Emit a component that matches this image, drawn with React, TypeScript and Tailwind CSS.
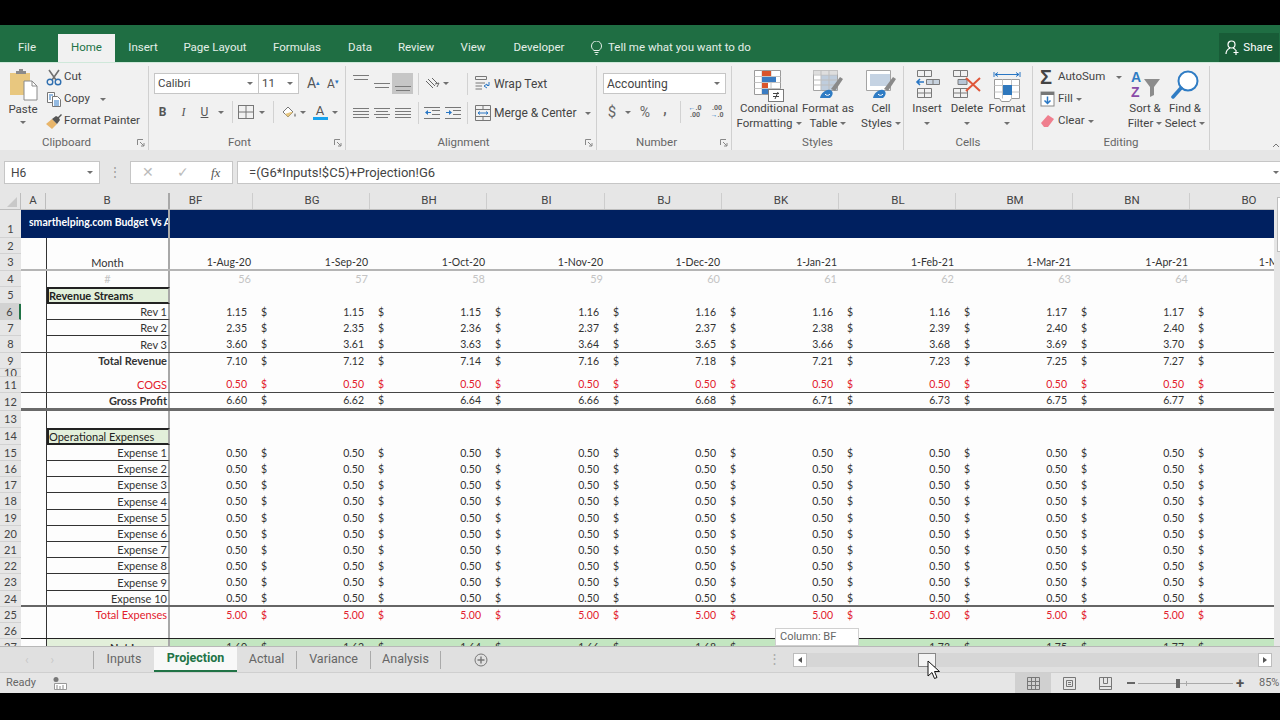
import type { ReactNode } from 'react';

const ui = "font-['Roboto','Open_Sans',sans-serif]";
const cellFont = "font-['Lato','Liberation_Sans',sans-serif]";

function Caret({ className = '' }: { className?: string }) {
  return <span className={`inline-block border-x-[3px] border-t-[3px] border-x-transparent border-t-[#707070] ${className}`} />;
}

function Box({ w, children, className = '' }: { w: string; children?: ReactNode; className?: string }) {
  return <div className={`${w} h-[20px] shrink-0 flex items-center justify-center ${className}`}>{children}</div>;
}

function Sep() {
  return <div className="w-px h-[22px] bg-[#d2d2d2] shrink-0" />;
}

function Lines({ rows }: { rows: [number, number][] }) {
  return (
    <svg width="16" height="14" viewBox="0 0 16 14" stroke="#7a7a7a" strokeWidth="1">
      {rows.map(([x, y], i) => (
        <line key={i} x1={x} x2={16 - x} y1={y + 0.5} y2={y + 0.5} />
      ))}
    </svg>
  );
}

function IndentIcon({ flip }: { flip?: boolean }) {
  return (
    <svg width="16" height="14" viewBox="0 0 16 14">
      <g stroke="#777">
        <line x1="8" x2="16" y1="4.5" y2="4.5" />
        <line x1="8" x2="16" y1="8.5" y2="8.5" />
        <line x1="0" x2="16" y1="12.5" y2="12.5" />
        <line x1="0" x2="16" y1="1.5" y2="1.5" />
      </g>
      <path d={flip ? 'M1 6h3V4l3 2.500L4 9V7H1z' : 'M7 6H4V4L1 6.500 4 9V7h3z'} fill="#2a77c4" />
    </svg>
  );
}

function PasteIcon() {
  return (
    <svg width="28" height="32" viewBox="0 0 28 32">
      <path d="M0 4h20v22H0z" fill="#e8c77f" />
      <path d="M6 4V2h3V0h4v2h3v3H6z" fill="#8a8a8a" />
      <path d="M14 12h8l5 5v14H14z" fill="#fff" stroke="#8a8a8a" />
      <path d="M22 12v5h5" fill="none" stroke="#8a8a8a" />
    </svg>
  );
}

function CutIcon() {
  return (
    <svg width="16" height="17" viewBox="0 0 16 17" fill="none" className="shrink-0">
      <path d="M3 1l7 10M13 1L6 11" stroke="#707070" strokeWidth="1.6" />
      <circle cx="4" cy="13" r="2.8" stroke="#2f6fb0" strokeWidth="1.4" />
      <circle cx="12" cy="13" r="2.8" stroke="#2f6fb0" strokeWidth="1.4" />
    </svg>
  );
}

function CopyIcon() {
  return (
    <svg width="16" height="15" viewBox="0 0 16 15" fill="#fff" stroke="#777" className="shrink-0">
      <path d="M1.500.5h7v10h-7z" />
      <path d="M6.500 4.500h5l3 3v7h-8z" />
      <path d="M3 3h4M3 5h2M3 7h2M8 9h5M8 11h5M8 13h5" stroke="#2a77c4" />
    </svg>
  );
}

function PainterIcon() {
  return (
    <svg width="16" height="15" viewBox="0 0 16 15" className="shrink-0">
      <path d="M0 10l6-5 5 5-5 5z" fill="#e8b56a" />
      <path d="M6 5l4-3 2 1 3-3 1 1-3 3 1 2-3 4z" fill="#555" />
    </svg>
  );
}

function GridIcon() {
  return (
    <svg width="16" height="14" viewBox="0 0 16 14" fill="none" stroke="#777">
      <rect x="0.5" y="0.5" width="15" height="13" />
      <path d="M8 .5v13M.5 7h15" />
    </svg>
  );
}

function CondIcon() {
  return (
    <svg width="30" height="32" viewBox="0 0 30 32">
      <path d="M.5.5h26v24H.5z" fill="#fff" stroke="#9a9a9a" />
      <path d="M8 .5v24M17 .5v24M.5 6.500h26M.5 12.500h26M.5 18.500h26" stroke="#c4c4c4" />
      <path d="M8 1h9v5H8zM8 13h6v5H8z" fill="#d9552b" />
      <path d="M8 7h14v5H8zM8 19h6v5H8z" fill="#3a7cc2" />
      <rect x="14.500" y="19.500" width="15" height="12" fill="#fff" stroke="#7a7a7a" />
      <path d="M19 23.500h6M19 26.500h6M24 22l-3 7" stroke="#444" fill="none" />
    </svg>
  );
}

function TableIcon({ partial }: { partial?: boolean }) {
  return (
    <svg width="30" height="30" viewBox="0 0 30 30">
      <path d="M.5.5h24v20H.5z" fill="#fff" stroke="#a4a4a4" />
      {partial ? (
        <path d="M4 4h20v12H4z" fill="#c5d3e3" />
      ) : (
        <>
          <path d="M.5 .5h24v4H.5z" fill="#dedede" />
          <path d="M8 5h16v15H8z" fill="#bfcddd" />
          <path d="M8 .5v20M16 .5v20M.5 5h24M.5 10h24M.5 15h24" stroke="#bdbdbd" />
        </>
      )}
      <path d="M18 19l9-12 3 2-8 12z" fill="#8a8a8a" />
      <path d="M7 28c1-5 6-9 10-8 4 1 3 6 0 8z" fill="#2f7cc4" />
      <path d="M17 24a3 3 0 0 1-5 0" stroke="#fff" fill="none" />
    </svg>
  );
}

function InsertIcon() {
  return (
    <svg width="26" height="28" viewBox="0 0 26 28" fill="none" stroke="#7a7a7a">
      <path d="M3.500 .5h14v6h-14zM10.500 .5v6M3.500 18.500h14v9h-14zM10.500 18.500v9M3.500 23h14" />
      <path d="M12.500 9.500h13v5h-13zM19 9.500v5" fill="#c7d2de" />
      <path d="M10 12H3M6 9l-3 3 3 3" stroke="#2a77c4" strokeWidth="1.6" />
    </svg>
  );
}

function DeleteIcon() {
  return (
    <svg width="30" height="28" viewBox="0 0 30 28" fill="none" stroke="#7a7a7a">
      <path d="M1.500 .5h14v6h-14zM8.500 .5v6M1.500 18.500h14v9h-14zM8.500 18.500v9M1.500 23h14" />
      <path d="M6 9.500h9v5H6z" fill="#b8c6d6" />
      <path d="M14 8l14 13M28 8L14 21" stroke="#e0573a" strokeWidth="2" />
    </svg>
  );
}

function FormatIcon() {
  return (
    <svg width="28" height="32" viewBox="0 0 28 32" fill="none">
      <path d="M1 2v5M27 2v5M2 4.500h24M2 4.500l3-2M2 4.500l3 2M26 4.500l-3-2M26 4.500l-3 2" stroke="#2a77c4" />
      <path d="M1.500 9.500h25v19l-8 0-2 3h-8l-2-3h-5z" fill="#fff" stroke="#9a9a9a" />
      <path d="M9.500 9.500v19M18.500 9.500v19M1.500 15.500h25M1.500 22h25" stroke="#c4c4c4" />
      <rect x="10" y="15" width="9" height="10" fill="#2f78bd" />
    </svg>
  );
}

function SortIcon() {
  return (
    <svg width="30" height="30" viewBox="0 0 30 30">
      <path d="M14 9h16l-6 8v8l-4 2V17z" fill="#8c8c8c" />
      <text x="1" y="12" fontSize="14" fontWeight="700" fill="#2f7cc4" fontFamily="Liberation Sans">A</text>
      <text x="1" y="27" fontSize="14" fontWeight="700" fill="#8a4ba8" fontFamily="Liberation Sans">Z</text>
    </svg>
  );
}

function FindIcon() {
  return (
    <svg width="28" height="30" viewBox="0 0 28 30" fill="none">
      <circle cx="17" cy="11" r="9.500" stroke="#2f7cc4" strokeWidth="2" fill="#fff" />
      <path d="M10 18L2 27" stroke="#2f7cc4" strokeWidth="3.500" strokeLinecap="round" />
    </svg>
  );
}

function LargeButton({ w, icon, l1, l2, caret = true }: { w: string; icon: ReactNode; l1: string; l2?: string; caret?: boolean }) {
  return (
    <div className={`${w} shrink-0 flex flex-col items-center pt-[7px]`}>
      <div className="h-[31px] flex items-start">{icon}</div>
      <div className="h-[15px] leading-[15px] whitespace-nowrap">{l1}</div>
      <div className="h-[15px] leading-[15px] whitespace-nowrap flex items-center gap-[3px]">
        {l2}
        {caret && <Caret />}
      </div>
    </div>
  );
}

function Group({ w, label, launcher = true, children }: { w: string; label: string; launcher?: boolean; children: ReactNode }) {
  return (
    <div className={`${w} shrink-0 h-[84px] mt-[3px] flex flex-col border-r border-[#d0d0d0]`}>
      <div className="h-[69px] -mt-[3px]">{children}</div>
      <div className="h-[18px] flex items-center relative text-[#666]">
        <span className={`flex-1 text-center leading-[18px] pt-[2px] ${launcher ? 'pr-[15px]' : ''}`}>{label}</span>
        {launcher && (
          <svg className="absolute right-[3px] top-[7px]" width="8" height="8" viewBox="0 0 8 8" fill="none" stroke="#888">
            <path d="M.5 6V.5H6M3 3l4 4M7 4v3H4" />
          </svg>
        )}
      </div>
    </div>
  );
}

function Ribbon() {
  return (
    <div className={`h-[88px] bg-[#f1f1f1] border-t border-[#cfe8da] flex text-[11.5px] text-[#444] ${ui}`}>
      <Group w="w-[149px]" label="Clipboard">
        <div className="flex">
          <div className="w-[46px] flex flex-col items-center pt-[6px]">
            <div className="h-[30px] pl-[2px]"><PasteIcon /></div>
            <div className="h-[15px] leading-[15px] mt-[3px]">Paste</div>
            <Caret className="mt-[4px]" />
          </div>
          <div className="flex flex-col pt-[3px]">
            <div className="h-[22px] flex items-center gap-[2px]"><CutIcon /><span>Cut</span></div>
            <div className="h-[22px] flex items-center gap-[2px]"><CopyIcon /><span>Copy</span><Caret className="ml-[8px]" /></div>
            <div className="h-[22px] flex items-center gap-[2px]"><PainterIcon /><span>Format Painter</span></div>
          </div>
        </div>
      </Group>
      <Group w="w-[197px]" label="Font">
        <div className="flex items-center h-[21px] mt-[10px] pl-[5px]">
          <div className="w-[105px] h-[21px] bg-white border border-[#c6c6c6] flex items-center justify-between px-[3px]">Calibri<Caret className="mr-[2px]" /></div>
          <div className="w-[40px] h-[21px] bg-white border border-l-0 border-[#c6c6c6] flex items-center justify-between px-[3px]">11<Caret className="mr-[2px]" /></div>
          <span className="ml-[8px] w-[19px] text-[14px] text-[#555]">A<sup className="text-[#2a77c4] text-[7px]">▴</sup></span>
          <span className="ml-[1px] text-[12px] text-[#555]">A<sup className="text-[#2a77c4] text-[7px]">▾</sup></span>
        </div>
        <div className="flex items-center h-[20px] mt-[8px] pl-[3px] text-[12px] text-[#555]">
          <Box w="w-[21px]" className="font-bold">B</Box>
          <Box w="w-[21px]" className="italic font-['Liberation_Serif']">I</Box>
          <Box w="w-[21px]" className="underline">U</Box>
          <Box w="w-[12px]"><Caret /></Box>
          <div className="w-[5px]" />
          <Sep />
          <Box w="w-[26px]"><GridIcon /></Box>
          <Box w="w-[6px]"><Caret /></Box>
          <div className="w-[8px]" />
          <Sep />
          <div className="w-[6px]" />
          <Box w="w-[18px]">
            <svg width="16" height="14" viewBox="0 0 16 14" fill="none">
              <path d="M2 7l5-5 5 5-5 5z" stroke="#777" fill="#fff" />
              <path d="M4 9l6-2 2 0-5 5z" fill="#e8c77f" />
              <path d="M14 8c1 2 1 3 0 4-1-1-1-2 0-4z" fill="#777" />
            </svg>
          </Box>
          <Box w="w-[10px]"><Caret /></Box>
          <Box w="w-[24px]" className="flex-col">
            <span className="leading-[13px] text-[13px]">A</span>
            <span className="w-[15px] h-[3px] bg-[#18a3ee]" />
          </Box>
          <Box w="w-[6px]"><Caret /></Box>
        </div>
      </Group>
      <Group w="w-[251px]" label="Alignment">
        <div className="flex items-center h-[21px] mt-[10px] pl-[4px]">
          <Box w="w-[21px]" className="pb-[6px]"><Lines rows={[[0, 1], [1, 5]]} /></Box>
          <Box w="w-[21px]"><Lines rows={[[0, 6], [1, 10]]} /></Box>
          <Box w="w-[21px]" className="h-[21px] bg-[#c6c6c6] pt-[6px]"><Lines rows={[[0, 6], [1, 10]]} /></Box>
          <div className="w-[5px]" />
          <Sep />
          <div className="w-[5px]" />
          <Box w="w-[16px]">
            <svg width="16" height="14" viewBox="0 0 16 14" fill="none" stroke="#666">
              <path d="M2 4l7 7M4 2l7 7M8 1l5 5M13 10l2 -4-4 1" />
            </svg>
          </Box>
          <Box w="w-[12px]"><Caret /></Box>
          <div className="w-[15px]" />
          <Sep />
          <div className="w-[7px]" />
          <svg width="16" height="16" viewBox="0 0 16 16" fill="none" stroke="#777" className="shrink-0">
            <path d="M.5.5h11v3H.5zM.5 7H10M.5 10H7M.5 13H7" />
            <path d="M9 10l3-2 0 1.500h2V6M9 10l3 2" stroke="#2a77c4" />
          </svg>
          <span className="ml-[3px] text-[12px]">Wrap Text</span>
        </div>
        <div className="flex items-center h-[20px] mt-[9px] pl-[4px]">
          <Box w="w-[21px]"><Lines rows={[[0, 2], [0, 5], [0, 8], [0, 11]]} /></Box>
          <Box w="w-[21px]"><Lines rows={[[0, 2], [2, 5], [0, 8], [2, 11]]} /></Box>
          <Box w="w-[21px]"><Lines rows={[[0, 2], [0, 5], [0, 8], [0, 11]]} /></Box>
          <div className="w-[5px]" />
          <Sep />
          <div className="w-[3px]" />
          <Box w="w-[20px]"><IndentIcon /></Box>
          <Box w="w-[21px]"><IndentIcon flip /></Box>
          <div className="w-[4px]" />
          <Sep />
          <div className="w-[7px]" />
          <svg width="16" height="16" viewBox="0 0 16 16" fill="none" stroke="#777" className="shrink-0">
            <path d="M.5.5h15v15H.5zM.5 4.500h15M.5 11.500h15M8 .5v4M8 11.500v4" />
            <path d="M3 8h10M3 8l2-1.500M3 8l2 1.500M13 8l-2-1.500M13 8l-2 1.500" stroke="#2a77c4" />
          </svg>
          <span className="ml-[3px] w-[88px] whitespace-nowrap text-[12px]">Merge &amp; Center</span>
          <Caret className="ml-[3px]" />
        </div>
      </Group>
      <Group w="w-[135px]" label="Number">
        <div className="h-[21px] w-[123px] mt-[10px] ml-[6px] bg-white border border-[#c6c6c6] flex items-center justify-between px-[3px] text-[12px]">Accounting<Caret className="mr-[2px]" /></div>
        <div className="flex items-center h-[20px] mt-[8px] pl-[7px] text-[#666]">
          <Box w="w-[16px]" className="text-[15px]">$</Box>
          <Box w="w-[16px]"><Caret /></Box>
          <Box w="w-[18px]" className="text-[14px]">%</Box>
          <Box w="w-[22px]" className="font-bold text-[14px] pb-[5px]">,</Box>
          <div className="w-[4px]" />
          <Sep />
          <Box w="w-[28px]" className="text-[7px] leading-[7px] font-bold">
            <span className="text-center"><span className="text-[#2a77c4]">←</span>.0<br />.00</span>
          </Box>
          <Box w="w-[16px]" className="text-[7px] leading-[7px] font-bold">
            <span className="text-center">.00<br /><span className="text-[#2a77c4]">→</span>.0</span>
          </Box>
        </div>
      </Group>
      <Group w="w-[172px]" label="Styles" launcher={false}>
        <div className="flex pl-[4px] gap-[3px]">
          <LargeButton w="w-[66px]" icon={<CondIcon />} l1="Conditional" l2="Formatting" />
          <LargeButton w="w-[46px]" icon={<TableIcon />} l1="Format as" l2="Table" />
          <div className="w-[3px]" />
          <LargeButton w="w-[42px]" icon={<TableIcon partial />} l1="Cell" l2="Styles" />
        </div>
      </Group>
      <Group w="w-[129px]" label="Cells" launcher={false}>
        <div className="flex pl-[3px]">
          <LargeButton w="w-[40px]" icon={<InsertIcon />} l1="Insert" />
          <LargeButton w="w-[40px]" icon={<DeleteIcon />} l1="Delete" />
          <LargeButton w="w-[40px]" icon={<FormatIcon />} l1="Format" />
        </div>
      </Group>
      <Group w="w-[177px]" label="Editing" launcher={false}>
        <div className="flex pl-[7px]">
          <div className="w-[85px] flex flex-col pt-[3px]">
            <div className="h-[22px] flex items-center gap-[3px]">
              <span className="w-[15px] text-[20px] leading-[19px] font-bold font-['Liberation_Sans'] text-[#444]">Σ</span>
              <span>AutoSum</span><Caret className="ml-[8px]" />
            </div>
            <div className="h-[22px] flex items-center gap-[3px]">
              <svg width="15" height="16" viewBox="0 0 15 16" fill="none">
                <rect x="1" y="1" width="13" height="14" fill="#fff" stroke="#8a8a8a" />
                <path d="M1 1h13v3H1z" fill="#777" />
                <path d="M7.500 5.500v7M4.500 9.500l3 3 3-3" stroke="#2a77c4" strokeWidth="1.500" />
              </svg>
              <span>Fill</span><Caret />
            </div>
            <div className="h-[22px] flex items-center gap-[3px]">
              <svg width="15" height="14" viewBox="0 0 15 14">
                <path d="M1 9l7-8 6 4-6 8H4z" fill="#ef7f8e" />
              </svg>
              <span>Clear</span><Caret />
            </div>
          </div>
          <LargeButton w="w-[40px]" icon={<SortIcon />} l1="Sort &" l2="Filter" />
          <LargeButton w="w-[40px]" icon={<FindIcon />} l1="Find &" l2="Select" />
        </div>
      </Group>
      <div className="flex-1 flex items-end justify-end pb-[3px] pr-px text-[#777]">
        <svg width="6" height="4" viewBox="0 0 6 4" fill="none" stroke="#777"><path d="M0 4l3-3 3 3" /></svg>
      </div>
    </div>
  );
}

function TabStrip() {
  const tabs: [string, string][] = [
    ['File', 'w-[54px] mr-[4px]'],
    ['Home', 'w-[57px]'],
    ['Insert', 'w-[56px]'],
    ['Page Layout', 'w-[88px]'],
    ['Formulas', 'w-[76px]'],
    ['Data', 'w-[50px]'],
    ['Review', 'w-[62px]'],
    ['View', 'w-[52px]'],
    ['Developer', 'w-[80px]'],
  ];
  return (
    <div className={`h-[37px] bg-[#1f6e43] flex items-end text-[11.5px] text-[#e4efe8] ${ui}`}>
      {tabs.map(([t, w]) => (
        <div key={t} className={`${w} h-[28px] flex items-center justify-center ${t === 'Home' ? 'bg-[#f1f1f1] text-[#217346]' : ''}`}>{t}</div>
      ))}
      <div className="h-[28px] flex items-center pl-[12px]">
        <svg width="11" height="14" viewBox="0 0 11 14" fill="none" stroke="#e4efe8">
          <path d="M3 9.500C1 8 .5 6.500.5 5a5 5 0 0 1 10 0c0 1.500-.5 3-2.500 4.500zM3.500 11.500h4M4.500 13.500h2" />
        </svg>
        <span className="ml-[6px]">Tell me what you want to do</span>
      </div>
      <div className="flex-1" />
      <div className="w-[60px] mr-px h-[29px] bg-[#185c37] flex items-center justify-center gap-[3px] text-white">
        <svg width="15" height="15" viewBox="0 0 15 15" fill="none" stroke="#fff" strokeWidth="1.200">
          <circle cx="6.500" cy="4.500" r="3.500" />
          <path d="M1 14c0-3 2-5 4-6M8 8c1 .3 2 1 2.500 2M11 10v5M8.500 12.500h5" />
        </svg>
        Share
      </div>
    </div>
  );
}

function FormulaBar() {
  return (
    <div className={`h-[40px] bg-[#e6e6e6] pt-[11px] text-[12px] text-[#444] ${ui}`}>
      <div className="flex h-[23px] items-stretch">
        <div className="w-[96px] ml-[4px] bg-white border border-[#c6c6c6] flex items-center justify-between pl-[6px] pr-[6px]">H6<Caret /></div>
        <div className="w-[30px] flex items-center justify-center text-[#999] leading-none pb-[2px]">⋮</div>
        <div className="w-[103px] bg-white border border-[#c6c6c6] flex items-center pl-[11px] text-[#bbb]">
          <span className="w-[35px] text-[14px]">✕</span>
          <span className="w-[34px] text-[14px]">✓</span>
          <span className="font-['Liberation_Serif'] italic text-[#555] text-[13px]">fx</span>
        </div>
        <div className="flex-1 ml-[4px] bg-white border border-r-0 border-[#c6c6c6] flex items-center justify-between pl-[11px] pr-[1px] text-[13px]">
          =(G6*Inputs!$C5)+Projection!G6
          <Caret />
        </div>
      </div>
    </div>
  );
}

const colW = ['w-[83px]', 'w-[117px]', 'w-[117px]', 'w-[118px]', 'w-[117px]', 'w-[117px]', 'w-[117px]', 'w-[117px]', 'w-[117px]', 'w-[117px]'];
const colL = ['BF', 'BG', 'BH', 'BI', 'BJ', 'BK', 'BL', 'BM', 'BN', 'BO'];
const dates = ['1-Aug-20', '1-Sep-20', '1-Oct-20', '1-Nov-20', '1-Dec-20', '1-Jan-21', '1-Feb-21', '1-Mar-21', '1-Apr-21', '1-May-21'];
const idx = ['56', '57', '58', '59', '60', '61', '62', '63', '64', '65'];

function ColumnHeaders() {
  return (
    <div className={`h-[20px] bg-[#e6e6e6] flex text-[11.5px] text-[#444] border-b border-[#bdbdbd] overflow-hidden pt-[3px] ${ui}`}>
      <div className="w-[21px] shrink-0 flex items-end justify-end pr-[3px] pb-[2px] border-r border-[#bdbdbd]">
        <span className="border-l-[10px] border-b-[10px] border-l-transparent border-b-[#c8c8c8]" />
      </div>
      <div className="w-[25px] shrink-0 flex items-center justify-center border-r border-[#bdbdbd]">A</div>
      <div className="w-[124px] shrink-0 flex items-center justify-center border-r-2 border-[#a8a8a8]">B</div>
      {colL.map((c, i) => (
        <div key={c} className={`${colW[i]} shrink-0 flex items-center justify-center border-r border-[#cdcdcd] ${i === 0 ? 'pr-[31px]' : 'pl-[2px]'}`}>{c}</div>
      ))}
    </div>
  );
}

type Row = {
  n: string;
  h: string;
  label?: string;
  labelClass?: string;
  boxed?: boolean;
  line?: string;
  bLine?: boolean;
  values?: string[];
  red?: boolean;
  bg?: string;
};

const rep = (v: string) => Array(9).fill(v) as string[];

const expenses: Row[] = ['Expense 1', 'Expense 2', 'Expense 3', 'Expense 4', 'Expense 5', 'Expense 6', 'Expense 7', 'Expense 8', 'Expense 9'].map((label, i) => ({
  n: String(15 + i),
  h: i === 3 || i === 8 ? 'h-[17px]' : 'h-[16px]',
  label,
  bLine: true,
  values: rep('0.50'),
}));

const rows: Row[] = [
  { n: '5', h: 'h-[17px]', label: 'Revenue Streams', labelClass: 'font-bold', boxed: true },
  { n: '6', h: 'h-[16px]', label: 'Rev 1', bLine: true, values: ['1.15', '1.15', '1.15', '1.16', '1.16', '1.16', '1.16', '1.17', '1.17'] },
  { n: '7', h: 'h-[16px]', label: 'Rev 2', bLine: true, values: ['2.35', '2.35', '2.36', '2.37', '2.37', '2.38', '2.39', '2.40', '2.40'] },
  { n: '8', h: 'h-[17px]', label: 'Rev 3', line: 'border-b border-[#444]', values: ['3.60', '3.61', '3.63', '3.64', '3.65', '3.66', '3.68', '3.69', '3.70'] },
  { n: '9', h: 'h-[16px]', label: 'Total Revenue', labelClass: 'font-bold pb-[1px]', values: ['7.10', '7.12', '7.14', '7.16', '7.18', '7.21', '7.23', '7.25', '7.27'] },
  { n: '10', h: 'h-[8px]' },
  { n: '11', h: 'h-[16px]', label: 'COGS', red: true, line: 'border-b border-[#444]', values: rep('0.50') },
  { n: '12', h: 'h-[18px]', label: 'Gross Profit', labelClass: 'font-bold', line: 'border-b-[3px] border-[#6a6a6a]', values: ['6.60', '6.62', '6.64', '6.66', '6.68', '6.71', '6.73', '6.75', '6.77'] },
  { n: '13', h: 'h-[17px]' },
  { n: '14', h: 'h-[17px]', label: 'Operational Expenses', boxed: true },
  ...expenses,
  { n: '24', h: 'h-[16px]', label: 'Expense 10', line: 'border-b-2 border-[#666]', values: rep('0.50') },
  { n: '25', h: 'h-[16px]', label: 'Total Expenses', labelClass: 'pb-[1px]', red: true, values: rep('5.00') },
  { n: '26', h: 'h-[16px]', line: 'border-b border-[#222]' },
  { n: '27', h: 'h-[16px]', label: 'Net Income', labelClass: 'font-bold bg-[#e2efda]', bg: 'bg-[#c3e6c1]', values: ['1.60', '1.62', '1.64', '1.66', '1.68', '1.71', '1.73', '1.75', '1.77'] },
];

function RowNum({ n, h, sel, bottom }: { n: string; h: string; sel?: boolean; bottom?: boolean }) {
  return (
    <div className={`w-[21px] ${h} shrink-0 flex justify-center overflow-hidden border-b border-[#d2d2d2] text-[#444] ${bottom ? 'items-end' : 'items-center pt-[1px]'} ${sel ? 'bg-[#d2d2d2] border-r-2 border-r-[#217346]' : 'bg-[#e6e6e6]'}`}>
      {n}
    </div>
  );
}

function DataRow({ r }: { r: Row }) {
  const text = r.red ? 'text-[#e2202c]' : 'text-[#333]';
  return (
    <div className={`flex ${r.h} ${text}`}>
      <RowNum n={r.n} h={r.h} sel={r.n === '6'} />
      <div className={`flex flex-1 min-w-0 ${r.line ?? ''}`}>
        <div className="w-[26px] shrink-0 border-r border-[#333]" />
        <div className={`w-[123px] shrink-0 border-r-2 border-r-[#a8a8a8] flex items-center leading-none overflow-hidden whitespace-nowrap ${r.bLine ? 'border-b border-b-[#333]' : ''} ${r.boxed ? 'justify-start bg-[#e2efda] border-2 border-[#222] text-[#222]' : 'justify-end pr-[1px]'} ${r.labelClass ?? ''}`}>
          {r.label}
        </div>
        {r.values && colW.map((w, i) => (
          <div key={i} className={`${w} shrink-0 flex items-center justify-between pt-[1px] text-[10.5px] ${r.bg ?? ''} ${i === 9 ? 'overflow-hidden' : ''}`}>
            <span className="pl-[8px]">{i > 0 ? '$' : ''}</span>
            <span className="pr-[6px]">{i < 9 ? r.values![i] : ''}</span>
          </div>
        ))}
      </div>
    </div>
  );
}

function Sheet() {
  return (
    <div className={`relative h-[456px] flex overflow-hidden bg-[#fdfdfd] text-[11px] ${cellFont}`}>
      <div className="w-[1274px] shrink-0 flex flex-col overflow-hidden">
        <ColumnHeaders />
        <div className="h-[436px] overflow-hidden">
          <div className="flex h-[28px]">
            <RowNum n="1" h="h-[28px]" bottom />
            <div className="flex-1 bg-[#002060] flex">
              <div className="w-[149px] h-full border-r-2 border-[#a8a8a8] overflow-hidden whitespace-nowrap flex items-center pl-[8px] pb-[3px] text-white font-bold text-[10.500px]">
                smarthelping.com Budget Vs Actual
              </div>
            </div>
          </div>
          <div className="flex h-[16px]">
            <RowNum n="2" h="h-[16px]" />
            <div className="w-[26px] shrink-0 border-r border-[#333]" />
            <div className="w-[123px] border-r-2 border-[#a8a8a8]" />
          </div>
          <div className="flex h-[17px] text-[#333]">
            <RowNum n="3" h="h-[17px]" />
            <div className="flex flex-1 min-w-0 border-b-2 border-[#b5b5b5]">
              <div className="w-[26px] shrink-0 border-r border-[#333]" />
              <div className="w-[123px] shrink-0 border-r-2 border-[#a8a8a8] flex items-center justify-center pt-[3px]">Month</div>
              {colW.map((w, i) => (
                <div key={i} className={`${w} shrink-0 flex items-center justify-end pr-[2px] pt-[3px] whitespace-nowrap text-[10.500px]`}>{dates[i]}</div>
              ))}
            </div>
          </div>
          <div className="flex h-[16px] text-[#c4c4c4]">
            <RowNum n="4" h="h-[16px]" />
            <div className="w-[26px] shrink-0 border-r border-[#333]" />
            <div className="w-[123px] shrink-0 border-r-2 border-[#a8a8a8] flex items-center justify-center">#</div>
            {colW.map((w, i) => (
              <div key={i} className={`${w} shrink-0 flex items-center justify-end pr-[2px]`}>{idx[i]}</div>
            ))}
          </div>
          {rows.map((r) => <DataRow key={r.n} r={r} />)}
        </div>
      </div>
      <div className="flex-1 bg-[#e6e6e6] pt-[7px] pl-[3px]">
        <div className="h-[55px] bg-white border border-r-0 border-[#bdbdbd]" />
      </div>
      <div className={`absolute left-[775px] top-[438px] w-[84px] h-[18px] bg-white border border-[#d0d0d0] flex items-center pl-[4px] text-[11px] text-[#666] ${ui}`}>
        Column: BF
      </div>
    </div>
  );
}

function SheetTabs() {
  const tabs: [string, string][] = [['Inputs', 'w-[60px]'], ['Projection', 'w-[83px]'], ['Actual', 'w-[60px]'], ['Variance', 'w-[74px]'], ['Analysis', 'w-[70px]']];
  return (
    <div className={`h-[26px] bg-[#e0e0e0] border-t border-[#b8b8b8] flex items-center text-[12.5px] text-[#666] ${ui}`}>
      <div className="w-[94px] h-[18px] flex items-center pl-[25px] gap-[22px] text-[#c8c8c8] text-[12px] border-r border-[#aaa] shrink-0">
        <span>‹</span><span>›</span>
      </div>
      {tabs.map(([t, w]) => (
        <div key={t} className={`${w} shrink-0 flex items-center justify-center ${t === 'Projection' ? 'h-full bg-[#f8f8f8] text-[#217346] font-bold border-b-2 border-[#217346]' : t === 'Inputs' ? 'h-[18px]' : 'h-[18px] border-r border-[#aaa]'}`}>{t}</div>
      ))}
      <div className="w-[80px] shrink-0 flex justify-center">
        <svg width="14" height="14" viewBox="0 0 14 14" fill="none" stroke="#777">
          <circle cx="7" cy="7" r="6" />
          <path d="M7 3.500v7M3.500 7h7" strokeWidth="1.400" />
        </svg>
      </div>
      <div className="w-[272px] shrink-0 flex justify-end pr-[12px] text-[#aaa]">⋮</div>
      <div className="flex items-center flex-1 h-[14px] pr-[8px]">
        <div className="w-[14px] h-[14px] bg-white border border-[#bdbdbd] flex items-center justify-center">
          <span className="border-y-[3px] border-r-[4px] border-y-transparent border-r-[#555]" />
        </div>
        <div className="flex-1 h-full bg-[#d6d6d6]">
          <div className="ml-[111px] w-[18px] h-[14px] bg-[#f4f4f4] border border-[#888]" />
        </div>
        <div className="w-[14px] h-[14px] bg-white border border-[#bdbdbd] flex items-center justify-center">
          <span className="border-y-[3px] border-l-[4px] border-y-transparent border-l-[#555]" />
        </div>
      </div>
    </div>
  );
}

function StatusBar() {
  return (
    <div className={`h-[21px] bg-[#e6e6e6] border-t border-[#cfcfcf] flex items-center text-[11px] text-[#666] overflow-hidden ${ui}`}>
      <span className="ml-[6px] w-[47px] shrink-0">Ready</span>
      <svg width="14" height="13" viewBox="0 0 14 13" className="shrink-0">
        <circle cx="3" cy="2.500" r="2.500" fill="#777" />
        <path d="M1.500 6.500h12v6h-12z" fill="#fff" stroke="#999" />
        <path d="M4 8v4M7 9v3M10 8v4" stroke="#888" />
      </svg>
      <div className="w-[948px] shrink-0" />
      <div className="w-[36px] h-full shrink-0 bg-[#d0d0d0] flex items-center justify-center">
        <svg width="13" height="13" viewBox="0 0 13 13" fill="none" stroke="#777">
          <path d="M.5.5h12v12H.5zM4.500.5v12M8.500.5v12M.5 4.500h12M.5 8.500h12" />
        </svg>
      </div>
      <div className="w-[36px] shrink-0 flex justify-center">
        <svg width="13" height="13" viewBox="0 0 13 13" fill="none" stroke="#777">
          <path d="M.5.5h12v12H.5zM3.500 3.500h6v6h-6zM5 5.500h3M5 7.500h3" />
        </svg>
      </div>
      <div className="w-[36px] shrink-0 flex justify-center">
        <svg width="13" height="13" viewBox="0 0 13 13" fill="none" stroke="#777">
          <path d="M.5.500h12v12H.5zM4.500.500v6h4v-6M.5 9.500h12" />
        </svg>
      </div>
      <span className="w-[8px] h-[2px] bg-[#666] ml-[4px] shrink-0" />
      <div className="w-[95px] ml-[3px] shrink-0 h-[9px] flex items-center relative">
        <div className="w-full h-px bg-[#aaa]" />
        <span className="absolute left-[38px] w-[4px] h-[9px] bg-[#666]" />
        <span className="absolute left-[48px] w-px h-[5px] bg-[#aaa]" />
      </div>
      <span className="ml-[3px] text-[#555] text-[15px] font-bold w-[23px] shrink-0 leading-none">+</span>
      <span className="whitespace-nowrap">85%</span>
    </div>
  );
}

export default function App() {
  return (
    <div className="w-[1280px] h-[720px] bg-black overflow-hidden flex flex-col relative">
      <div className="h-[25px] shrink-0" />
      <TabStrip />
      <Ribbon />
      <FormulaBar />
      <Sheet />
      <SheetTabs />
      <StatusBar />
      <svg className="absolute left-[927px] top-[660px]" width="14" height="20" viewBox="0 0 14 20">
        <path d="M1 1v15l4-3.500 2.500 6 2.500-1-2.500-6h5z" fill="#fff" stroke="#111" />
      </svg>
    </div>
  );
}
